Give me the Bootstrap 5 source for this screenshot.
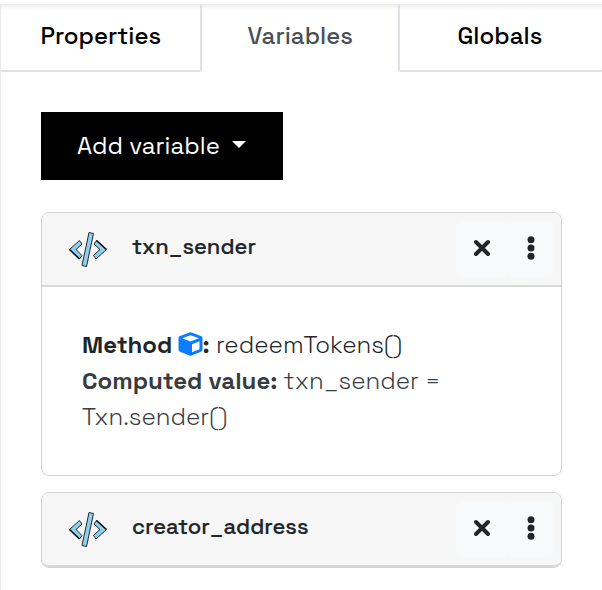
<!DOCTYPE html>
<html lang="en">
<head>
<meta charset="utf-8">
<meta name="viewport" content="width=device-width, initial-scale=1">
<title>Variables</title>
<link href="https://cdn.jsdelivr.net/npm/bootstrap@5.3.0/dist/css/bootstrap.min.css" rel="stylesheet">
<style>
body{font-family:"Space Grotesk",Inter,"Liberation Sans",sans-serif;font-size:24px;color:#212529;overflow:hidden;height:590px}
.panel{border-left:1px solid #e9eaeb;height:590px}
.strip{height:4px;margin-left:-1px}
.side-tabs{height:68px;box-shadow:inset 0 5px 5px -3px rgba(0,0,0,.1);flex-wrap:nowrap;border:0}
.side-tabs .nav-link{height:68px;line-height:34px;padding:15px 0 0;margin:0;border:0 solid #dee2e6;border-bottom-width:2px;border-radius:0;color:#000;font-weight:500;text-align:left}
.side-tabs .t-prop{width:201px;padding-left:39.5px;border-right-width:2px;border-bottom-right-radius:3px}
.side-tabs .nav-link.t-vars{width:196px;padding-left:45.5px;color:#495057;background:transparent;border:0}
.side-tabs .t-glob{width:204px;padding-left:57.5px;border-left-width:2px;border-bottom-left-radius:3px}
.content{padding:40px 40px 0}
.btn-add{width:242px;height:68px;background:#000!important;color:#fff!important;border:0;border-radius:0;font-size:24px;padding:0 0 0 36px;text-align:left}
.btn-add::after{margin-left:12px;vertical-align:6px;border-top-width:7px;border-left-width:7px;border-right-width:7px}
.var-card{width:521px;border:1px solid #d2d3d4;border-radius:8px}
.first-card{margin-top:32px}
.var-card .card-header{height:74px;padding:0 8px 0 26px;background:#f7f7f7;border-bottom:2px solid #d7d8d8;border-radius:7px 7px 0 0}
.code-icon{margin-top:2px}
.var-card.folded{height:76px}
.var-card.folded .card-header{border-radius:7px}
.var-name{font-size:22px;font-weight:500;-webkit-text-stroke:.2px #212529;letter-spacing:.03px;margin-left:24px;margin-top:-5px}
.btn-tool{width:52px;height:56px;padding:0 0 4px;background:#f8f9fa;border:0;border-radius:6px}
.btn-tool.menu{width:45px}
.var-card .card-body{height:188px;padding:40px;line-height:36px;font-weight:300}
.var-card b{font-weight:600}
.cube{display:inline-block;width:25px;height:24px;vertical-align:-3px;margin:0 -.5px}
.soft{color:#373c40}
</style>
</head>
<body>
<svg class="d-none">
<symbol id="code" viewBox="0 0 40 38">
<g fill="#8fd0ee" stroke="#20292e" stroke-width="1" stroke-linejoin="round">
<path d="M1.500 18.500 11.500 9.500 14 13 8 18.500 14 24.500 11.500 28Z"/>
<path d="M38.500 18.500 28.500 9.500 26 13 32 18.500 25.500 24.500 28 28Z"/>
<path d="M21 1.500 25.500 2.500 18.500 35.500 14 34.500Z"/></g>
<path d="M1.500 18.500 11.500 28M28.500 9.500 38.500 18.500" stroke="#111" stroke-width="1.600" fill="none"/>
</symbol>
<symbol id="close" viewBox="0 0 18 18"><path d="M3 3 15 15M15 3 3 15" stroke="#212529" stroke-width="4" stroke-linecap="round"/></symbol>
<symbol id="dots" viewBox="0 0 8 24"><g fill="#212529"><circle cx="4" cy="3.700" r="3.500"/><circle cx="4" cy="12" r="3.500"/><circle cx="4" cy="20.300" r="3.500"/></g></symbol>
</svg>
<div class="panel">
<div class="strip bg-white"></div>
<nav class="nav nav-tabs side-tabs">
<a class="nav-link t-prop" href="#">Properties</a>
<a class="nav-link active t-vars" href="#">Variables</a>
<a class="nav-link t-glob" href="#">Globals</a>
</nav>
<main class="content">
<button class="btn btn-add dropdown-toggle" type="button">Add variable</button>
<section class="card var-card first-card">
<div class="card-header d-flex align-items-center">
<svg class="code-icon" width="40" height="38"><use href="#code"/></svg>
<span class="var-name me-auto">txn_sender</span>
<button class="btn btn-tool" aria-label="Remove"><svg width="18" height="18"><use href="#close"/></svg></button>
<button class="btn btn-tool menu" aria-label="Menu"><svg width="8" height="24"><use href="#dots"/></svg></button>
</div>
<div class="card-body">
<div><b>Method</b> <svg class="cube" viewBox="0 0 25 24"><path fill="#0a7cff" d="M11.500.500Q12.500 0 13.500.500L23 4Q24.500 4.500 24.500 6V17.500Q24.500 19 23 19.700L13.500 23.500Q12.500 24 11.500 23.500L2 19.700Q.500 19 .500 17.500V6Q.500 4.500 2 4Z"/><path fill="#fff" d="M12.500 3.200 21 6.300 12.500 9.600 4 6.300ZM14 12.300 21.500 9.300V17.300L14 20.300Z"/></svg><b>:</b> redeemTokens()</div>
<div class="soft"><b>Computed value:</b> txn_sender =</div>
<div class="soft">Txn.sender()</div>
</div>
</section>
<section class="card var-card folded mt-3">
<div class="card-header d-flex align-items-center">
<svg class="code-icon" width="40" height="38"><use href="#code"/></svg>
<span class="var-name me-auto">creator_address</span>
<button class="btn btn-tool" aria-label="Remove"><svg width="18" height="18"><use href="#close"/></svg></button>
<button class="btn btn-tool menu" aria-label="Menu"><svg width="8" height="24"><use href="#dots"/></svg></button>
</div>
</section>
</main>
</div>
<script src="https://cdn.jsdelivr.net/npm/bootstrap@5.3.0/dist/js/bootstrap.bundle.min.js"></script>
</body>
</html>
